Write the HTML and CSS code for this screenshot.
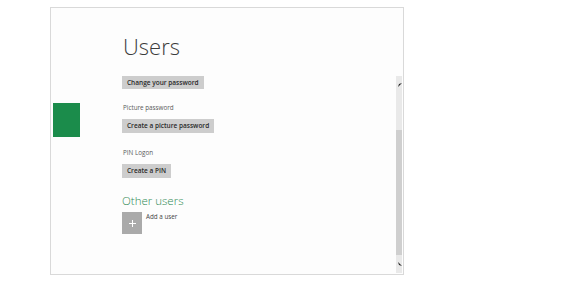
FILE: index.html
```html
<!DOCTYPE html>
<html lang="en">
<head>
  <meta charset="UTF-8">
  <title>Users</title>
  <link rel="stylesheet" href="styles.css">
</head>
<body>
<div class="frame">
  <div class="side">
    <div class="accent"></div>
  </div>
  <div class="content">
    <h1 class="title">Users</h1>
    <div class="btn btn-first">Change your password</div>
    <div class="label">Picture password</div>
    <div class="btn">Create a picture password</div>
    <div class="label label-pin">PIN Logon</div>
    <div class="btn">Create a PIN</div>
    <h2 class="sub">Other users</h2>
    <div class="add">
      <div class="add-tile">
        <svg width="7" height="7" viewBox="0 0 7 7"><path d="M3.5 0V7M0 3.5H7" stroke="#fff" stroke-width="1"/></svg>
      </div>
      <span class="add-text">Add a user</span>
    </div>
  </div>
  <div class="scroll">
    <div class="track-top"></div>
    <div class="thumb"></div>
    <div class="track-bottom"></div>
    <svg class="arrow arrow-up" width="4" height="4" viewBox="0 0 4 4"><path d="M0 4L1 1L4 0L2 2Z" fill="#222"/></svg>
    <svg class="arrow arrow-down" width="4" height="4" viewBox="0 0 4 4"><path d="M0 0L1 3L4 4L2 2Z" fill="#222"/></svg>
  </div>
</div>
</body>
</html>
```

FILE: styles.css
```css
* {
  margin: 0;
  padding: 0;
  box-sizing: border-box;
}

body {
  background: #fff;
  font-family: "Open Sans", "Liberation Sans", sans-serif;
}

.frame {
  display: flex;
  width: 354px;
  height: 268px;
  margin: 7px 0 0 50px;
  border: 1px solid #d9d9d9;
  background: #fdfdfd;
}

.side {
  padding: 95px 0 0 2px;
}

.accent {
  width: 27px;
  height: 34px;
  background: #1b8c4b;
}

.content {
  flex: 1;
  padding: 26px 0 0 42px;
}

.title {
  font-size: 22px;
  line-height: 24px;
  font-weight: 300;
  color: #3c3c3c;
  margin-left: 1px;
}

.btn {
  width: fit-content;
  height: 14px;
  line-height: 14px;
  padding: 0 5px;
  background: #cdcdcd;
  color: #2a2a2a;
  font-size: 6.5px;
  font-weight: 600;
  margin-top: 7px;
}

.btn-first {
  height: 13px;
  line-height: 13px;
  margin-top: 18px;
}

.label {
  font-size: 6.3px;
  line-height: 8px;
  color: #5a5a5a;
  margin: 15px 0 0 1px;
}

.label-pin {
  margin-top: 16px;
}

.sub {
  font-size: 11.5px;
  line-height: 14px;
  font-weight: 300;
  color: #2f8a55;
  margin-top: 16px;
}

.add {
  display: flex;
  gap: 4px;
  margin-top: 4px;
}

.add-tile {
  width: 20px;
  height: 22px;
  background: #aaaaaa;
  display: flex;
  align-items: center;
  justify-content: center;
}

.add-text {
  font-size: 6.3px;
  line-height: 8px;
  color: #444;
  margin-top: 1px;
}

.scroll {
  position: relative;
  display: flex;
  flex-direction: column;
  width: 6px;
  height: 197px;
  margin: 68px 1px 0 0;
}

.track-top {
  height: 54px;
  background: #e9e9e9;
}

.thumb {
  height: 125px;
  background: #cfcfcf;
}

.track-bottom {
  flex: 1;
  background: #e9e9e9;
}

.arrow {
  position: absolute;
  left: 2px;
}

.arrow-up {
  top: 7px;
}

.arrow-down {
  bottom: 7px;
}
```
